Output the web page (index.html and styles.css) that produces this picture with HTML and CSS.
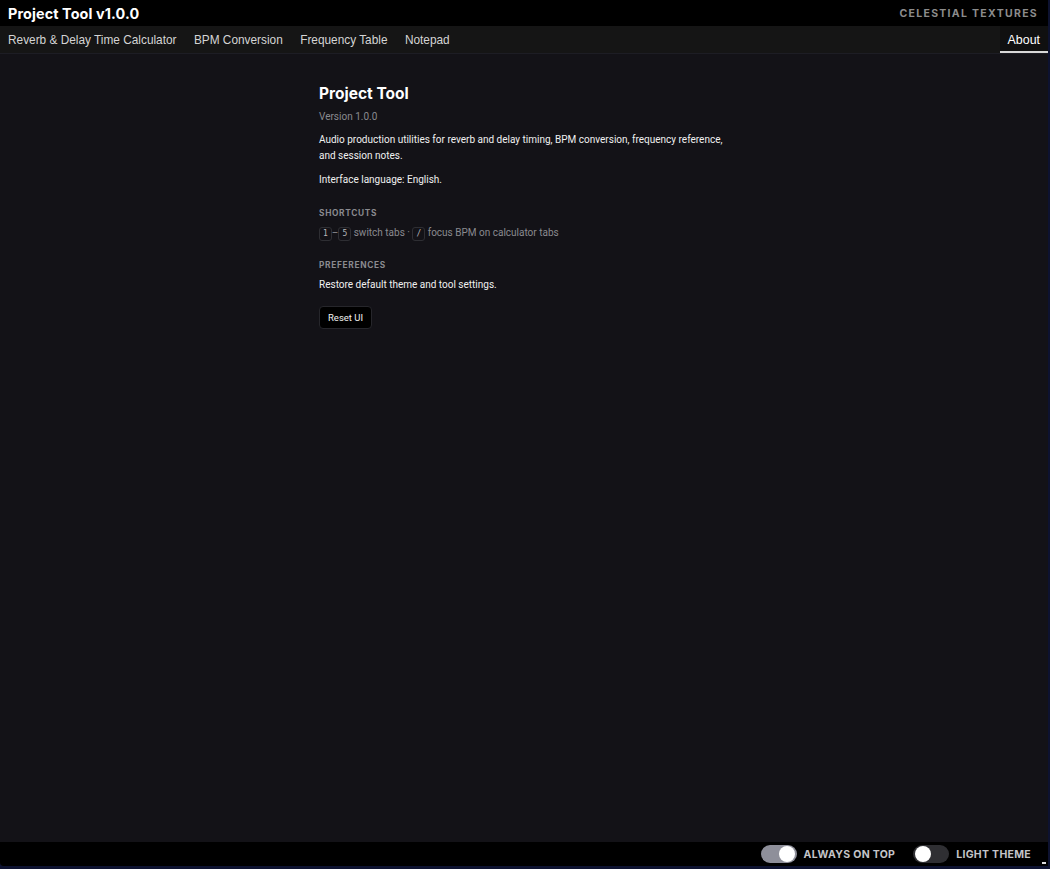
FILE: index.html
```html
<!DOCTYPE html>
<html lang="en">
<head>
<meta charset="utf-8">
<title>Project Tool v1.0.0</title>
<link rel="stylesheet" href="styles.css">
</head>
<body>
<div class="app">
  <header class="titlebar">
    <h1 class="app-title">Project Tool v1.0.0</h1>
    <span class="brand">CELESTIAL TEXTURES</span>
  </header>
  <nav class="tabs">
    <div class="tabs-left">
      <a class="tab">Reverb &amp; Delay Time Calculator</a>
      <a class="tab">BPM Conversion</a>
      <a class="tab">Frequency Table</a>
      <a class="tab">Notepad</a>
    </div>
    <a class="tab active">About</a>
  </nav>
  <main class="content">
    <section class="about">
      <h2 class="about-title">Project Tool</h2>
      <p class="version">Version 1.0.0</p>
      <p class="text">Audio production utilities for reverb and delay timing, BPM conversion, frequency reference, and session notes.</p>
      <p class="text">Interface language: English.</p>
      <h3 class="label">SHORTCUTS</h3>
      <p class="shortcuts"><kbd>1</kbd>–<kbd>5</kbd> switch tabs · <kbd>/</kbd> focus BPM on calculator tabs</p>
      <h3 class="label">PREFERENCES</h3>
      <p class="text after-label">Restore default theme and tool settings.</p>
      <button class="btn">Reset UI</button>
    </section>
  </main>
  <footer class="footer">
    <label class="toggle"><span class="switch on"><span class="knob"></span></span><span class="toggle-label">ALWAYS ON TOP</span></label>
    <label class="toggle"><span class="switch"><span class="knob"></span></span><span class="toggle-label">LIGHT THEME</span></label>
  </footer>
</div>
<span class="grip"></span>
</body>
</html>
```
FILE: styles.css
```css
* { box-sizing: border-box; }
html, body { height: 100%; }
body {
  margin: 0;
  background: #0d1230;
  font-family: Inter, "Noto Sans", sans-serif;
  color: #f2f2f2;
  overflow: hidden;
}
.app {
  height: 866px;
  width: 1048px;
  display: flex;
  flex-direction: column;
  background: #131217;
  border-bottom-left-radius: 4px;
  overflow: hidden;
}
.titlebar {
  height: 26px;
  background: #000;
  display: flex;
  align-items: center;
  justify-content: space-between;
  padding: 0 10px 0 8px;
}
.app-title {
  margin: 0;
  font-size: 14.4px;
  font-weight: 700;
  color: #fff;
  letter-spacing: 0.1px;
}
.brand {
  font-size: 10.5px;
  font-weight: 700;
  color: #8c8c8c;
  letter-spacing: 1.3px;
}
.tabs {
  height: 28px;
  background: #151515;
  border-bottom: 1px solid #1d1d24;
  display: flex;
  justify-content: space-between;
  align-items: stretch;
}
.tabs-left { display: flex; }
.tab {
  display: flex;
  align-items: center;
  padding: 2px 8.7px 0;
  font-family: "Liberation Sans", Arial, sans-serif;
  font-size: 11.85px;
  color: #d4d4d4;
  border-bottom: 2px solid transparent;
}
.tab:first-child { padding-left: 8px; }
.tab.active {
  color: #fff;
  font-size: 12.4px;
  background: #101010;
  border-bottom-color: #d8d8d8;
  padding: 2px 8px 0 8px;
}
.content {
  flex: 1;
  display: flex;
  justify-content: center;
}
.about {
  width: 410px;
  padding-top: 30px;
  font-family: Roboto, sans-serif;
}
.about-title {
  margin: 0;
  font-family: Inter, sans-serif;
  font-size: 15.5px;
  font-weight: 700;
  color: #fff;
  line-height: 20px;
}
.version {
  margin: 6px 0 0;
  font-size: 10px;
  color: #8a8a8f;
  line-height: 14px;
}
.text {
  margin: 8px 0 0;
  font-size: 10px;
  line-height: 16px;
  color: #f0f0f0;
}
.label {
  margin: 18px 0 0;
  font-family: Inter, sans-serif;
  font-size: 8.3px;
  font-weight: 700;
  letter-spacing: 0.7px;
  color: #8a8a8f;
  line-height: 14px;
}
.label + .text.after-label { margin-top: 5px; }
.shortcuts {
  margin: 5px 0 0;
  font-size: 10px;
  color: #8a8a8f;
  line-height: 16px;
}
.shortcuts + .label { margin-top: 17px; }
kbd {
  display: inline-block;
  font-family: "DejaVu Sans Mono", monospace;
  font-size: 8px;
  color: #b8b8bc;
  border: 1px solid #2e2e33;
  border-radius: 3px;
  padding: 0 3px;
  line-height: 12px;
  margin: 0;
}
.btn {
  display: block;
  margin-top: 13px;
  background: #000;
  border: 1px solid #26262b;
  border-radius: 4px;
  color: #f0f0f0;
  font-family: Roboto, sans-serif;
  font-size: 9.5px;
  font-weight: 400;
  height: 23px;
  padding: 0 8px;
}
.footer {
  height: 24px;
  background: #000;
  display: flex;
  justify-content: flex-end;
  align-items: center;
  gap: 18px;
  padding-right: 17px;
}
.toggle {
  display: flex;
  align-items: center;
  gap: 7px;
}
.switch {
  width: 36px;
  height: 18px;
  border-radius: 9px;
  background: #2f2f33;
  display: flex;
  align-items: center;
  padding: 0 2px;
}
.switch.on {
  background: #8e8f9a;
  justify-content: flex-end;
}
.knob {
  width: 16px;
  height: 16px;
  border-radius: 50%;
  background: #fff;
}
.toggle-label {
  font-size: 10.5px;
  font-weight: 700;
  letter-spacing: 0.3px;
  color: #c4c4c8;
}
.grip {
  position: absolute;
  left: 1042px;
  top: 862px;
  width: 4px;
  height: 2px;
  background: #ddd;
}
```
